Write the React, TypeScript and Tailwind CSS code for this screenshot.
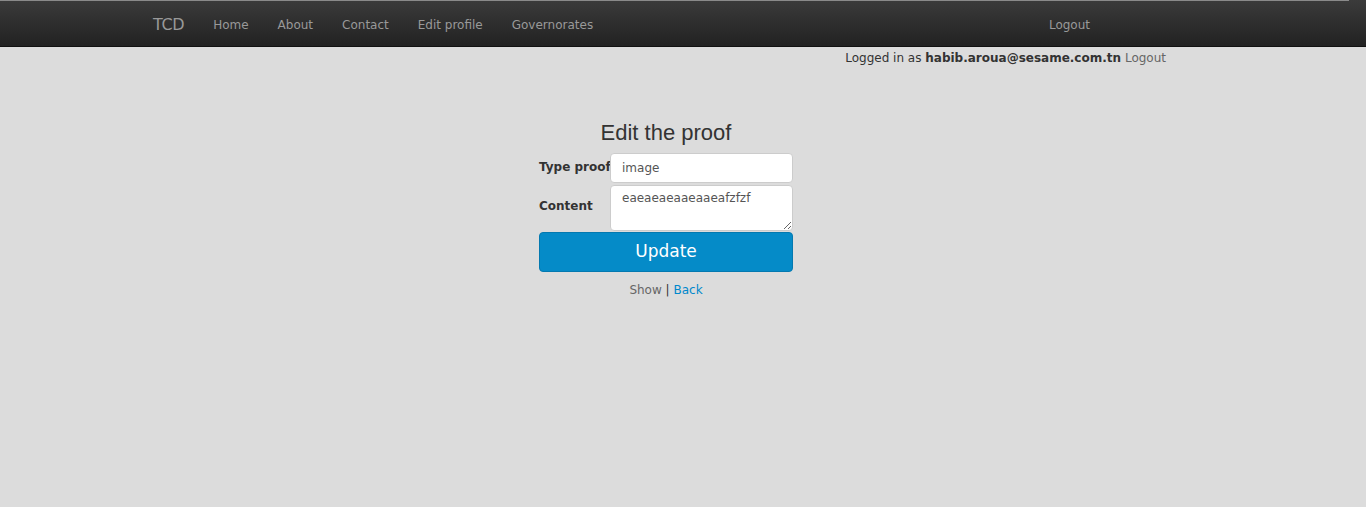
import React from 'react';

const navLinks = ['Home', 'About', 'Contact', 'Edit profile', 'Governorates'];

export default function App() {
  return (
    <div className="min-h-[507px] bg-[#dcdcdc] text-[#333] font-['DejaVu_Sans',sans-serif] text-[12px]">
      {/* Navbar */}
      <div className="relative h-[47px] bg-gradient-to-b from-[#3b3b3b] to-[#222] border-b border-[#111]">
        <div className="absolute left-0 top-0 h-px w-[1349px] bg-[#8a8a8a]" />
        <div className="flex h-full items-center pt-[4px] pl-[153px] pr-[276px]">
          <span className="text-[16px] text-[#999] mr-[29px] tracking-tight">TCD</span>
          <ul className="flex items-center gap-[29px] text-[#999]">
            {navLinks.map(l => (
              <li key={l}>{l}</li>
            ))}
          </ul>
          <span className="ml-auto text-[#999]">Logout</span>
        </div>
      </div>

      {/* Logged in line */}
      <div className="flex justify-end pr-[200px] pt-[2px] leading-[18px]">
        <span>
          Logged in as <b>habib.aroua@sesame.com.tn</b>{' '}
          <span className="text-[#666]">Logout</span>
        </span>
      </div>

      {/* Form */}
      <div className="ml-[539px] w-[254px] pt-[53px]">
        <h1 className="text-center font-['Liberation_Sans',sans-serif] text-[22px] leading-[26px] text-[#333]">
          Edit the proof
        </h1>
        <div className="mt-[7px] flex">
          <label className="w-[71px] whitespace-nowrap text-[12px] font-bold pt-[5px]">Type proof</label>
          <input
            readOnly
            value="image"
            className="h-[30px] w-[183px] rounded-[4px] border border-[#ccc] bg-white px-[11px] text-[12px] text-[#555] outline-none"
          />
        </div>
        <div className="mt-[2px] flex">
          <label className="w-[71px] whitespace-nowrap text-[12px] font-bold pt-[12px]">Content</label>
          <textarea
            readOnly
            value="eaeaeaeaaeaaeafzfzf"
            className="h-[46px] w-[183px] rounded-[4px] border border-[#ccc] bg-white px-[11px] py-[3px] text-[12px] leading-[18px] text-[#555] outline-none resize-y"
          />
        </div>
        <button className="mt-[1px] h-[40px] w-full rounded-[4px] bg-[#058bc8] border border-[#0479b0] text-[17px] text-white">
          Update
        </button>
        <div className="mt-[9px] text-center leading-[18px]">
          <span className="text-[#666]">Show</span> | <span className="text-[#0088cc]">Back</span>
        </div>
      </div>
    </div>
  );
}
